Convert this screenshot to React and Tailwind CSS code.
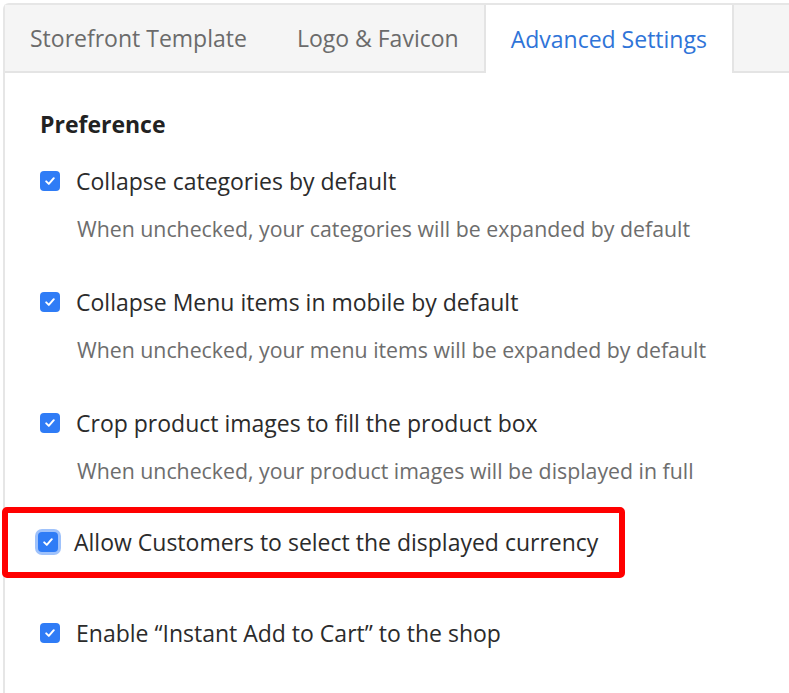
const tabs = ["Storefront Template", "Logo & Favicon", "Advanced Settings"];

const options = [
  {
    label: "Collapse categories by default",
    hint: "When unchecked, your categories will be expanded by default",
    space: "mb-[44px]",
  },
  {
    label: "Collapse Menu items in mobile by default",
    hint: "When unchecked, your menu items will be expanded by default",
    space: "mb-[44px]",
  },
  {
    label: "Crop product images to fill the product box",
    hint: "When unchecked, your product images will be displayed in full",
    space: "mb-[22px]",
  },
  {
    label: "Allow Customers to select the displayed currency",
    highlight: true,
    space: "mb-[40px]",
  },
  {
    label: "Enable \u201cInstant Add to Cart\u201d to the shop",
  },
];

const Check = ({ focused }) => (
  <span
    className={`flex h-[20px] w-[20px] shrink-0 items-center justify-center rounded-[4px] bg-[#2f7cf6] ${
      focused ? "ring-[3px] ring-[#9fc2fb]" : ""
    }`}
  >
    <svg width="12" height="12" viewBox="0 0 12 12" fill="none">
      <path
        d="M2.2 6.4 4.8 8.9 9.8 3.2"
        stroke="white"
        strokeWidth="2"
        strokeLinecap="round"
        strokeLinejoin="round"
      />
    </svg>
  </span>
);

const OptionRow = ({ option }) => {
  const row = (
    <div className="flex items-center gap-[16px]">
      <Check focused={option.highlight} />
      <span className="text-[23px] leading-[30px] text-[#2b2b2b]">
        {option.label}
      </span>
    </div>
  );

  if (option.highlight) {
    return (
      <div
        className={`-ml-[38px] w-[623px] rounded-[5px] border-[6px] border-[#ff0000] pt-[14px] pb-[15px] pl-[30px] ${option.space}`}
      >
        {row}
      </div>
    );
  }

  return (
    <div className={option.space}>
      {row}
      {option.hint ? (
        <p className="mt-[19px] pl-[37px] text-[21.3px] leading-[28px] text-[#6d6d6d]">
          {option.hint}
        </p>
      ) : null}
    </div>
  );
};

export default function App() {
  return (
    <div
      className="h-[693px] w-[789px] overflow-hidden bg-white pl-[3px] pt-[3px]"
      style={{ fontFamily: '"Open Sans", "Liberation Sans", sans-serif' }}
    >
      <div className="h-[720px] w-[820px] rounded-tl-[6px] border-l-2 border-t-2 border-[#e6e6e6]">
        <div className="flex h-[68px] border-b-2 border-[#e4e4e4] bg-[#f5f5f5]">
          {tabs.map((tab, i) => (
            <div
              key={tab}
              className={`flex items-center px-[25px] text-[23px] ${
                i === 2
                  ? "-mb-[2px] border-x-2 border-[#e4e4e4] bg-white text-[#2f74d8]"
                  : "text-[#6b6b6b]"
              }`}
            >
              {tab}
            </div>
          ))}
        </div>

        <div className="flex flex-col pl-[35px] pt-[36px]">
          <h2 className="mb-[27px] text-[23px] font-bold leading-[30px] text-[#222]">
            Preference
          </h2>
          {options.map((option) => (
            <OptionRow key={option.label} option={option} />
          ))}
        </div>
      </div>
    </div>
  );
}
